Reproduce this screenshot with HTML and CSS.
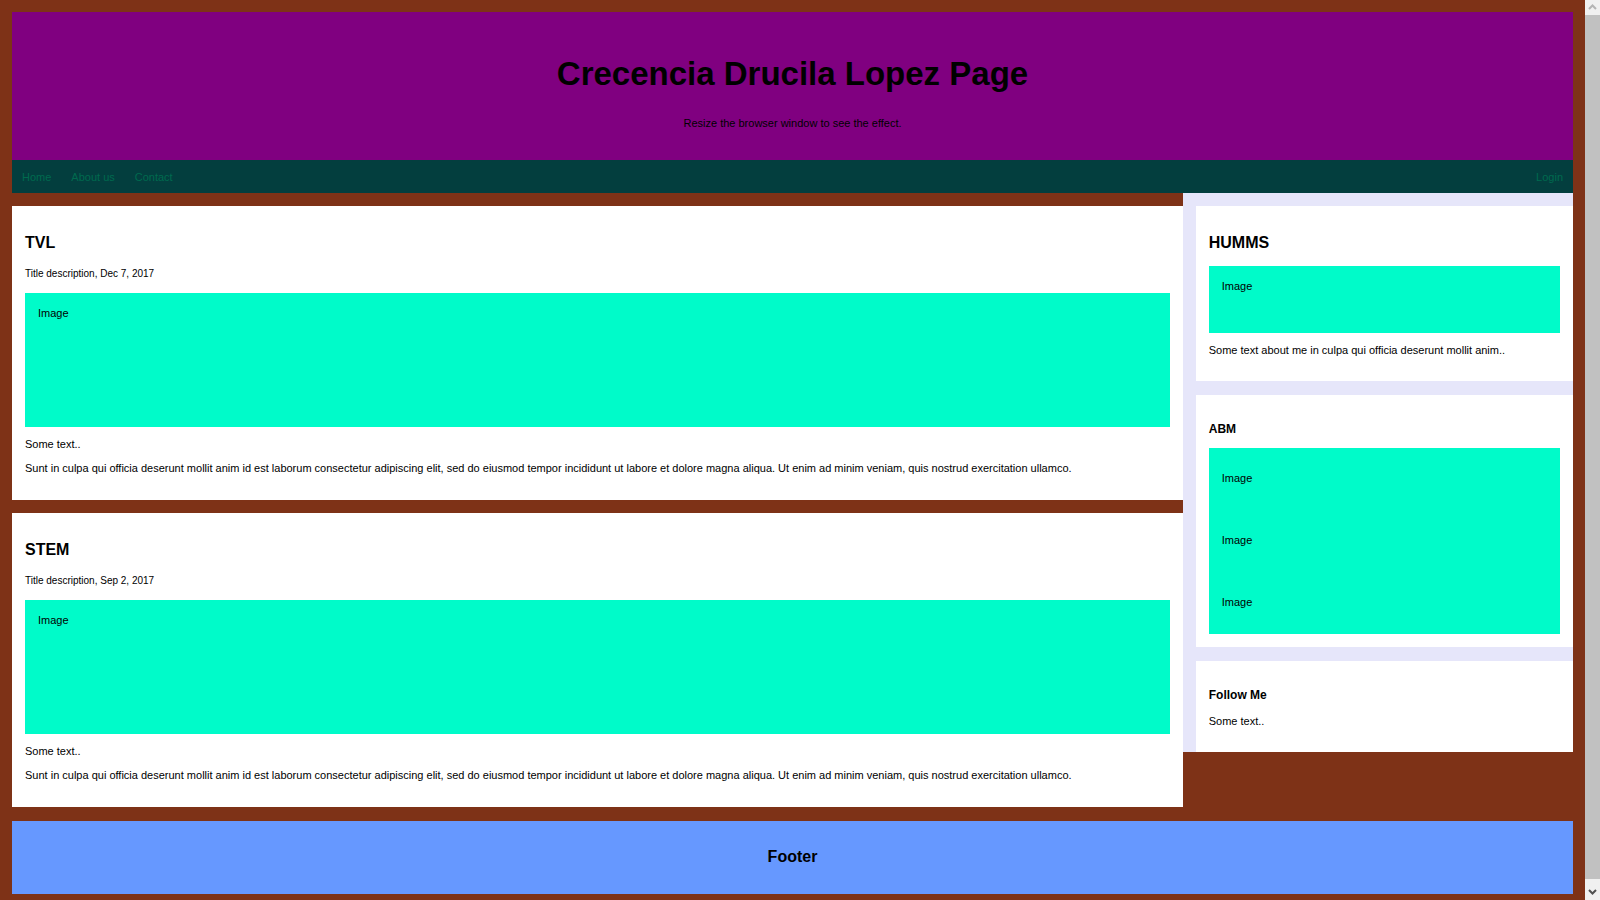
FILE: index.html
```html
<!DOCTYPE html>
<html lang="en">
<head>
<meta charset="utf-8">
<title>Crecencia Drucila Lopez Page</title>
<link rel="stylesheet" href="styles.css">
</head>
<body>
<div class="page">
  <header class="header">
    <h1>Crecencia Drucila Lopez Page</h1>
    <p>Resize the browser window to see the effect.</p>
  </header>
  <nav class="topnav">
    <a href="#">Home</a>
    <a href="#">About us</a>
    <a href="#">Contact</a>
    <a href="#" class="login">Login</a>
  </nav>
  <div class="row">
    <main class="leftcolumn">
      <article class="card">
        <h2>TVL</h2>
        <h5>Title description, Dec 7, 2017</h5>
        <div class="image large">Image</div>
        <p>Some text..</p>
        <p>Sunt in culpa qui officia deserunt mollit anim id est laborum consectetur adipiscing elit, sed do eiusmod tempor incididunt ut labore et dolore magna aliqua. Ut enim ad minim veniam, quis nostrud exercitation ullamco.</p>
      </article>
      <article class="card">
        <h2>STEM</h2>
        <h5>Title description, Sep 2, 2017</h5>
        <div class="image large">Image</div>
        <p>Some text..</p>
        <p>Sunt in culpa qui officia deserunt mollit anim id est laborum consectetur adipiscing elit, sed do eiusmod tempor incididunt ut labore et dolore magna aliqua. Ut enim ad minim veniam, quis nostrud exercitation ullamco.</p>
      </article>
    </main>
    <aside class="rightcolumn">
      <section class="card">
        <h2>HUMMS</h2>
        <div class="image small">Image</div>
        <p>Some text about me in culpa qui officia deserunt mollit anim..</p>
      </section>
      <section class="card">
        <h3>ABM</h3>
        <div class="image item">Image</div>
        <div class="image item">Image</div>
        <div class="image item">Image</div>
      </section>
      <section class="card">
        <h3>Follow Me</h3>
        <p>Some text..</p>
      </section>
    </aside>
  </div>
  <footer class="footer">
    <h2>Footer</h2>
  </footer>
</div>
<div class="scrollbar" aria-hidden="true">
  <svg class="arrow up" viewBox="0 0 15 15"><path d="M4 9 7.5 5.5 11 9"/></svg>
  <svg class="arrow" viewBox="0 0 15 21"><path d="M4 11 7.5 14.5 11 11"/></svg>
</div>
</body>
</html>
```
FILE: styles.css
```css
* {
  box-sizing: border-box;
}

body {
  display: flex;
  align-items: flex-start;
  margin: 0;
  min-height: 100vh;
  background: #7e3217;
  color: #000;
  font: 11px/13px "Liberation Sans", Arial, sans-serif;
}

h1,
h2,
h3,
h5,
p {
  margin: 0;
}

.page {
  flex: 1;
  min-width: 0;
  padding: 12px 12px 6px;
}

.header {
  padding: 43px 20px 30px;
  background: #800080;
  text-align: center;
}

.header h1 {
  margin-bottom: 24px;
  font-size: 33px;
  line-height: 38px;
}

.topnav {
  display: flex;
  background: #033e3e;
}

.topnav a {
  padding: 11px 10px 9px;
  color: #006a4e;
  text-decoration: none;
}

.topnav .login {
  margin-left: auto;
}

.row {
  display: flex;
  align-items: flex-start;
}

.leftcolumn {
  width: 75%;
}

.rightcolumn {
  width: 25%;
  padding-left: 13px;
  background: #e6e6fa;
}

.card {
  margin-top: 13px;
  padding: 27px 13px 24px;
  background: #fff;
}

.leftcolumn .card {
  padding-bottom: 25px;
}

.rightcolumn .card + .card {
  margin-top: 14px;
}

h2 {
  font-size: 16px;
  line-height: 20px;
}

h3 {
  font-size: 12px;
  line-height: 14px;
}

h5 {
  margin: 15px 0 13px;
  font-size: 10px;
  font-weight: normal;
  line-height: 12px;
}

.card p {
  margin-top: 11px;
}

.image {
  padding: 14px 13px;
  background: #00fbc9;
}

.large {
  height: 134px;
}

.small {
  height: 67px;
  margin-top: 13px;
}

.item {
  padding: 24px 13px 25px;
}

h3 + .item {
  margin-top: 12px;
}

.item:last-child {
  margin-bottom: -11px;
}

.card h3 + p {
  margin-top: 13px;
}

.footer {
  margin-top: 14px;
  padding: 26px 13px 27px;
  background: #6698ff;
  text-align: center;
}

.scrollbar {
  position: sticky;
  top: 0;
  display: flex;
  flex-direction: column;
  justify-content: space-between;
  width: 15px;
  height: 100vh;
  background: #c1c1c1;
}

.arrow {
  width: 15px;
  height: 21px;
  background: #f0f0f0;
  fill: none;
  stroke: #505050;
  stroke-width: 2;
}

.up {
  height: 15px;
  stroke: #b4b4b4;
}
```
